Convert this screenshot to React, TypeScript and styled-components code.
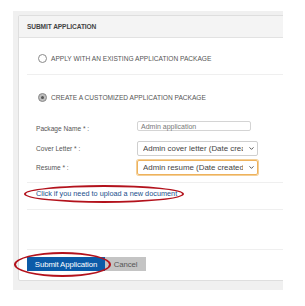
import React from "react";
import styled, { createGlobalStyle } from "styled-components";
import { ChevronDown } from "lucide-react";

const GlobalStyle = createGlobalStyle`
  body {
    margin: 0;
    background: #fff;
    font-family: "Liberation Sans", Arial, sans-serif;
  }
`;

const Backdrop = styled.div`
  margin: 11px 0 0 13px;
  width: 270px;
  height: 279px;
  background: #f0f0f0;
  overflow: hidden;
  padding: 4px 0 0 5px;
  box-sizing: border-box;
`;

const Card = styled.div`
  width: 320px;
  height: 266px;
  background: #fff;
  border: 1px solid #dedede;
  border-radius: 2px;
  box-sizing: border-box;
  display: flex;
  flex-direction: column;
`;

const Header = styled.div`
  height: 21px;
  flex-shrink: 0;
  background: #f4f4f4;
  border-bottom: 1px solid #e2e2e2;
  display: flex;
  align-items: center;
  padding-left: 8px;
  font-size: 6.6px;
  font-weight: bold;
  color: #444;
  letter-spacing: -0.1px;
`;

const Body = styled.div`
  padding-left: 8px;
  display: flex;
  flex-direction: column;
`;

const Section = styled.div<{ h: number; line?: boolean }>`
  height: ${(p) => p.h}px;
  flex-shrink: 0;
  border-bottom: ${(p) => (p.line ? "1px solid #efefef" : "none")};
  display: flex;
  flex-direction: column;
`;

const RadioRow = styled.label<{ top: number }>`
  display: flex;
  align-items: center;
  height: 9px;
  gap: 4px;
  margin: ${(p) => p.top}px 0 0 11px;
  font-size: 6.6px;
  color: #555;
  text-transform: uppercase;
`;

const RadioDot = styled.span<{ checked?: boolean }>`
  width: 7px;
  height: 7px;
  border-radius: 50%;
  border: 1px solid #8a8a8a;
  background: ${(p) => (p.checked ? "#bdbdbd" : "#fff")};
  display: flex;
  align-items: center;
  justify-content: center;
  &::after {
    content: "";
    display: ${(p) => (p.checked ? "block" : "none")};
    width: 3px;
    height: 3px;
    border-radius: 50%;
    background: #555;
  }
`;

const FieldRow = styled.div<{ top: number }>`
  display: flex;
  align-items: center;
  margin: ${(p) => p.top}px 0 0 9px;
  height: 15px;
`;

const Label = styled.span`
  width: 101px;
  font-size: 6.6px;
  color: #555;
`;

const TextInput = styled.div`
  align-self: flex-start;
  width: 114px;
  height: 10px;
  border: 1px solid #d4d4d4;
  border-radius: 2px;
  box-sizing: border-box;
  font-size: 7px;
  color: #777;
  padding-left: 3px;
  display: flex;
  align-items: center;
`;

const Select = styled.div<{ focused?: boolean }>`
  width: 121px;
  height: 15px;
  border: 1px solid ${(p) => (p.focused ? "#eeb25c" : "#cfcfcf")};
  box-shadow: ${(p) => (p.focused ? "0 0 0 1px #f3cf98" : "none")};
  border-radius: 2px;
  box-sizing: border-box;
  display: flex;
  align-items: center;
  padding: 0 2px 0 5px;
  font-size: 7.9px;
  color: #444;
  overflow: hidden;
  white-space: nowrap;
  svg {
    margin-left: 5px;
    flex-shrink: 0;
  }
`;

const SelectText = styled.span`
  flex: 1;
  overflow: hidden;
  text-overflow: clip;
`;

const LinkWrap = styled.div`
  position: relative;
  margin: 6px 0 0 9px;
  align-self: flex-start;
  font-size: 7.3px;
  line-height: 9px;
`;

const UploadLink = styled.a`
  color: #1b4f8c;
  text-decoration: none;
`;

const Ring = styled.span<{ l: number; t: number; w: number; h: number }>`
  position: absolute;
  left: ${(p) => p.l}px;
  top: ${(p) => p.t}px;
  width: ${(p) => p.w}px;
  height: ${(p) => p.h}px;
  border: 2px solid #b3121c;
  border-radius: 50%;
  box-sizing: border-box;
  pointer-events: none;
`;

const Actions = styled.div`
  display: flex;
  margin-top: 7px;
  position: relative;
  align-self: flex-start;
`;

const Button = styled.button<{ primary?: boolean }>`
  height: 14px;
  border: none;
  border-radius: 0;
  padding: 0;
  font-family: "Liberation Sans", Arial, sans-serif;
  font-size: 7.8px;
  background: ${(p) => (p.primary ? "#0b5ba8" : "#c4c4c4")};
  color: ${(p) => (p.primary ? "#fff" : "#555")};
  width: ${(p) => (p.primary ? "78px" : "41px")};
  letter-spacing: -0.1px;
`;

export default function App() {
  return (
    <>
      <GlobalStyle />
      <Backdrop>
        <Card>
          <Header>SUBMIT APPLICATION</Header>
          <Body>
            <Section h={36} line>
              <RadioRow top={16}>
                <RadioDot />
                Apply with an existing application package
              </RadioRow>
            </Section>
            <Section h={107} line>
              <RadioRow top={18}>
                <RadioDot checked />
                Create a customized application package
              </RadioRow>
              <FieldRow top={19}>
                <Label>Package Name * :</Label>
                <TextInput>Admin application</TextInput>
              </FieldRow>
              <FieldRow top={5}>
                <Label>Cover Letter * :</Label>
                <Select>
                  <SelectText>Admin cover letter (Date created: 01/01)</SelectText>
                  <ChevronDown size={7} strokeWidth={3} color="#444" />
                </Select>
              </FieldRow>
              <FieldRow top={4}>
                <Label>Resume * :</Label>
                <Select focused>
                  <SelectText>Admin resume (Date created: 01/01)</SelectText>
                  <ChevronDown size={7} strokeWidth={3} color="#444" />
                </Select>
              </FieldRow>
            </Section>
            <Section h={26} line>
              <LinkWrap>
                <UploadLink href="#">Click if you need to upload a new document</UploadLink>
                <Ring l={-12} t={-4} w={160} h={18} />
              </LinkWrap>
            </Section>
            <Section h={39} line />
            <Actions>
              <Button primary>Submit Application</Button>
              <Button>Cancel</Button>
              <Ring l={-13} t={-5} w={97} h={25} />
            </Actions>
          </Body>
        </Card>
      </Backdrop>
    </>
  );
}
